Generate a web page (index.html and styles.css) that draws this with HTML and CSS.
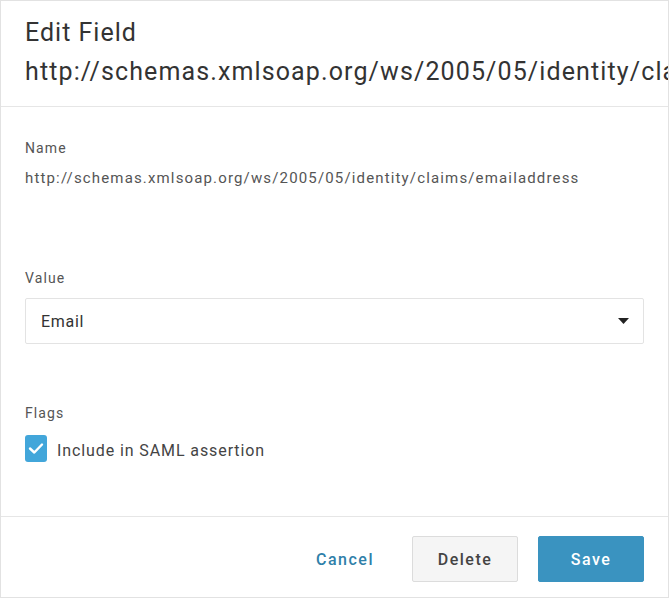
FILE: index.html
```html
<!DOCTYPE html>
<html>
<head>
<meta charset="utf-8">
<link rel="stylesheet" href="styles.css">
</head>
<body>
<div class="dialog">
  <div class="header">
    <div class="title title-main">Edit Field</div>
    <div class="title">http://schemas.xmlsoap.org/ws/2005/05/identity/claims/emailaddress</div>
  </div>
  <div class="content">
    <div class="label">Name</div>
    <div class="value">http://schemas.xmlsoap.org/ws/2005/05/identity/claims/emailaddress</div>
    <div class="label label-value">Value</div>
    <div class="select">
      <span class="select-text">Email</span>
      <svg class="caret" width="11" height="6" viewBox="0 0 11 6"><path d="M0 0 L11 0 L5.5 6 Z" fill="#222"/></svg>
    </div>
    <div class="label label-flags">Flags</div>
    <div class="check-row">
      <span class="checkbox">
        <svg width="22" height="27" viewBox="0 0 22 27"><path d="M5 13.5 L9.3 17.5 L17 9.5" fill="none" stroke="#fff" stroke-width="2.4" stroke-linecap="round" stroke-linejoin="round"/></svg>
      </span>
      <span class="check-label">Include in SAML assertion</span>
    </div>
  </div>
  <div class="footer">
    <button class="btn btn-cancel">Cancel</button>
    <button class="btn btn-delete">Delete</button>
    <button class="btn btn-save">Save</button>
  </div>
</div>
</body>
</html>
```
FILE: styles.css
```css
html, body {
  margin: 0;
  padding: 0;
  background: #ffffff;
}
body {
  font-family: Roboto, "Liberation Sans", sans-serif;
}
.dialog {
  box-sizing: border-box;
  width: 669px;
  height: 598px;
  border: 1px solid #e2e2e2;
  display: flex;
  flex-direction: column;
  overflow: hidden;
  background: #fff;
}
.header {
  padding: 12px 0 15px 24px;
  border-bottom: 1px solid #e6e6e6;
  white-space: nowrap;
  overflow: hidden;
}
.title {
  font-size: 25px;
  line-height: 39px;
  color: #333;
  letter-spacing: 1.12px;
}
.title-main {
  letter-spacing: 1px;
}
.content {
  flex: 1;
  padding: 31px 24px 0 24px;
  border-bottom: 1px solid #e6e6e6;
}
.label {
  font-size: 14px;
  line-height: 20px;
  color: #555;
  letter-spacing: 1.1px;
}
.value {
  font-size: 15px;
  line-height: 20px;
  color: #555;
  margin-top: 10px;
  letter-spacing: 1.15px;
  white-space: nowrap;
}
.label-value {
  margin-top: 80px;
}
.select {
  margin-top: 10px;
  box-sizing: border-box;
  height: 46px;
  border: 1px solid #e3e3e3;
  border-radius: 2px;
  display: flex;
  align-items: center;
  justify-content: space-between;
  padding: 0 14px 0 15px;
}
.select-text {
  font-size: 16px;
  color: #333;
  letter-spacing: 0.7px;
}
.caret {
  display: block;
}
.label-flags {
  margin-top: 59px;
}
.check-row {
  margin-top: 12px;
  display: flex;
  align-items: flex-start;
}
.checkbox {
  width: 22px;
  height: 27px;
  border-radius: 3px;
  background: #42a6da;
  display: block;
}
.checkbox svg {
  display: block;
}
.check-label {
  margin-left: 10px;
  margin-top: 6px;
  font-size: 16px;
  line-height: 20px;
  color: #444;
  letter-spacing: 0.9px;
}
.footer {
  height: 80px;
  box-sizing: border-box;
  padding: 19px 24px 0 0;
  display: flex;
  justify-content: flex-end;
  align-items: flex-start;
  gap: 20px;
}
.btn {
  font-family: Roboto, "Liberation Sans", sans-serif;
  font-size: 16px;
  font-weight: 500;
  letter-spacing: 1.5px;
  height: 46px;
  box-sizing: border-box;
  border-radius: 2px;
  cursor: pointer;
}
.btn-cancel {
  background: transparent;
  border: none;
  color: #2f80a9;
  padding: 0 18px 0 20px;
}
.btn-delete {
  width: 106px;
  background: #f5f5f5;
  border: 1px solid #dcdcdc;
  color: #444;
}
.btn-save {
  width: 106px;
  background: #3a93c0;
  border: 1px solid #3a93c0;
  color: #fff;
}
```
